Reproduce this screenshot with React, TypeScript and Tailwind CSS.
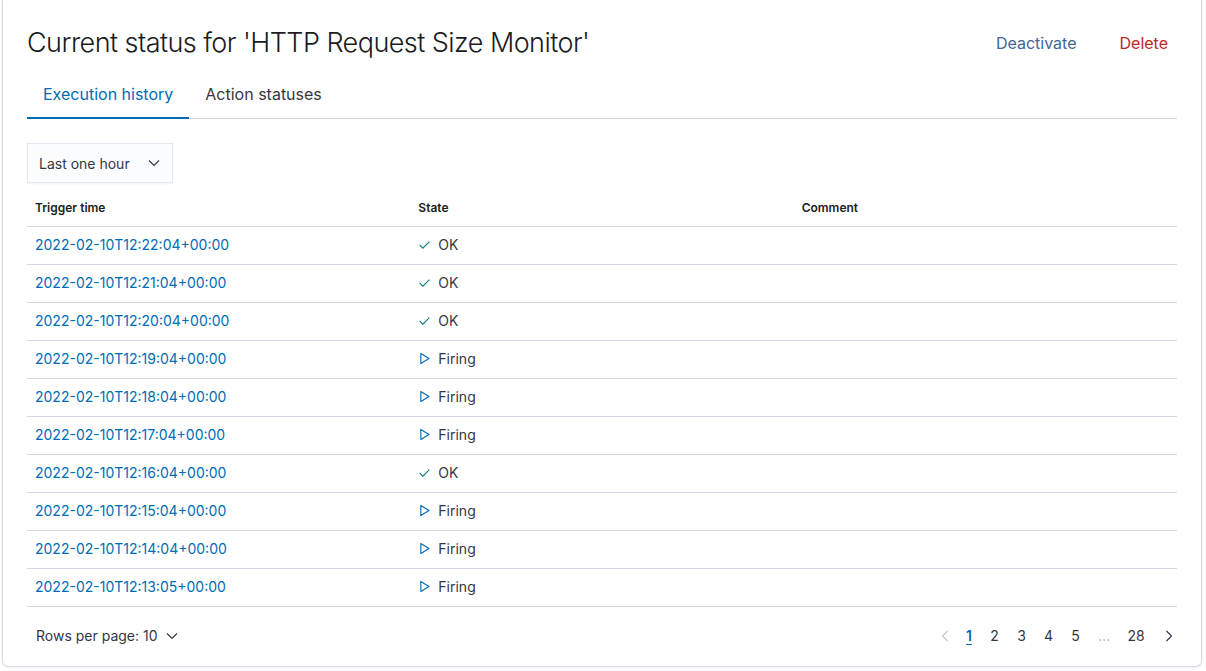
import { useState } from "react";

interface Execution {
  time: string;
  state: "OK" | "Firing";
  comment?: string;
}

const ROWS: Execution[] = [
  { time: "2022-02-10T12:22:04+00:00", state: "OK" },
  { time: "2022-02-10T12:21:04+00:00", state: "OK" },
  { time: "2022-02-10T12:20:04+00:00", state: "OK" },
  { time: "2022-02-10T12:19:04+00:00", state: "Firing" },
  { time: "2022-02-10T12:18:04+00:00", state: "Firing" },
  { time: "2022-02-10T12:17:04+00:00", state: "Firing" },
  { time: "2022-02-10T12:16:04+00:00", state: "OK" },
  { time: "2022-02-10T12:15:04+00:00", state: "Firing" },
  { time: "2022-02-10T12:14:04+00:00", state: "Firing" },
  { time: "2022-02-10T12:13:05+00:00", state: "Firing" },
];

const PAGES = ["1", "2", "3", "4", "5", "...", "28"];

function Chevron({ className = "" }: { className?: string }) {
  return (
    <svg width="16" height="16" viewBox="0 0 16 16" className={className} fill="none" stroke="currentColor" strokeWidth="1.2">
      <path d="M3 5.5l5 5 5-5" />
    </svg>
  );
}

function StateCell({ state }: { state: Execution["state"] }) {
  if (state === "OK") {
    return (
      <span className="flex items-center gap-[7px]">
        <svg width="13" height="13" viewBox="0 0 16 16" fill="none" stroke="#017d73" strokeWidth="1.3">
          <path d="M2 8.5l4 4 8-8" />
        </svg>
        OK
      </span>
    );
  }
  return (
    <span className="flex items-center gap-[7px]">
      <svg width="13" height="13" viewBox="0 0 16 16" fill="none" stroke="#006bb8" strokeWidth="1.4" strokeLinejoin="round">
        <path d="M3.5 1.8v12.4L13.5 8z" />
      </svg>
      Firing
    </span>
  );
}

export default function App() {
  const [tab, setTab] = useState("history");

  return (
    <div className="min-h-[671px] bg-white pl-[2px] pr-[4px] pb-[4px] text-[#343741]" style={{ fontFamily: "Inter, 'Noto Sans', sans-serif" }}>
      <div className="rounded-b-[6px] border border-t-0 border-[#d3dae6] bg-white px-[24px] pb-[18px] pt-[25px] shadow-[0_1px_3px_rgba(0,0,0,0.06)]">
        <div className="flex items-center justify-between">
          <h1 className="text-[27px] leading-[36px] font-light tracking-[-0.55px] text-[#1a1c21]">
            Current status for 'HTTP Request Size Monitor'
          </h1>
          <div className="flex items-center gap-[43px] pr-[9px] text-[16px]">
            <button className="text-[#3f6599]">Deactivate</button>
            <button className="text-[#bd271e]">Delete</button>
          </div>
        </div>

        <div className="mt-[18px] flex border-b border-[#d3dae6]">
          <button
            onClick={() => setTab("history")}
            className={`-mb-px border-b-2 px-[16px] pb-[11px] pt-[3px] text-[16px] leading-[24px] ${tab === "history" ? "border-[#006bb8] text-[#006bb8]" : "border-transparent text-[#343741]"}`}
          >
            Execution history
          </button>
          <button
            onClick={() => setTab("actions")}
            className={`-mb-px border-b-2 px-[16px] pb-[11px] pt-[3px] text-[16px] leading-[24px] ${tab === "actions" ? "border-[#006bb8] text-[#006bb8]" : "border-transparent text-[#343741]"}`}
          >
            Action statuses
          </button>
        </div>

        <div className="mt-[24px]">
          <div className="flex h-[40px] w-[146px] items-center justify-between border border-[#e3e7ef] bg-[#fbfcfd] pl-[11px] pr-[10px] text-[14px] shadow-[0_1px_2px_rgba(0,0,0,0.05)]">
            <span>Last one hour</span>
            <Chevron className="text-[#343741]" />
          </div>
        </div>

        <table className="mt-[7px] w-full table-fixed border-collapse text-[14px]">
          <thead>
            <tr className="border-b border-[#d3dae6]">
              <th className="h-[36px] w-1/3 px-[8px] pt-[1px] text-left text-[12px] font-semibold text-[#1a1c21]">Trigger time</th>
              <th className="h-[36px] w-1/3 px-[8px] pt-[1px] text-left text-[12px] font-semibold text-[#1a1c21]">State</th>
              <th className="h-[36px] w-1/3 px-[8px] pt-[1px] text-left text-[12px] font-semibold text-[#1a1c21]">Comment</th>
            </tr>
          </thead>
          <tbody>
            {ROWS.map((row) => (
              <tr key={row.time} className="border-b border-[#d3dae6]">
                <td className="h-[38px] px-[8px] pb-[1px]">
                  <a className="text-[#006bb8]">{row.time}</a>
                </td>
                <td className="h-[38px] px-[8px] pb-[1px]">
                  <StateCell state={row.state} />
                </td>
                <td className="h-[38px] px-[8px]">{row.comment}</td>
              </tr>
            ))}
          </tbody>
        </table>

        <div className="mt-[17px] flex items-center justify-between text-[14px]">
          <div className="flex items-center gap-[6px] pl-[9px]">
            <span>Rows per page: 10</span>
            <Chevron className="text-[#343741]" />
          </div>
          <div className="flex items-center">
            <svg width="16" height="16" viewBox="0 0 16 16" fill="none" stroke="#c2c7cf" strokeWidth="1.2" className="mr-[4px]">
              <path d="M10.5 3l-5 5 5 5" />
            </svg>
            {PAGES.map((p) => (
              <span
                key={p}
                className={`flex h-[24px] items-center justify-center ${p === "28" ? "min-w-[34px]" : p === "..." ? "min-w-[30px]" : p === "1" ? "min-w-[24px]" : "min-w-[27px]"} ${p === "1" ? "font-semibold text-[#006bb8] underline underline-offset-[3px]" : p === "..." ? "text-[#a2abba]" : "text-[#343741]"}`}
              >
                {p === "..." ? "…" : p}
              </span>
            ))}
            <svg width="16" height="16" viewBox="0 0 16 16" fill="none" stroke="#343741" strokeWidth="1.2" className="ml-[8px]">
              <path d="M5.5 3l5 5-5 5" />
            </svg>
          </div>
        </div>
      </div>
    </div>
  );
}
